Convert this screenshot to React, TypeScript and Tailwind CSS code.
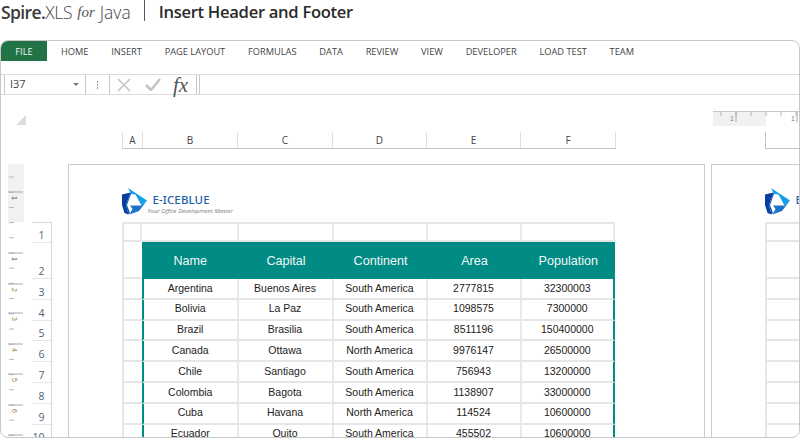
const TABS = ["HOME", "INSERT", "PAGE LAYOUT", "FORMULAS", "DATA", "REVIEW", "VIEW", "DEVELOPER", "LOAD TEST", "TEAM"];

const COLUMNS = [
  { label: "A", width: "w-[21px]" },
  { label: "B", width: "w-[95px]" },
  { label: "C", width: "w-[95px]" },
  { label: "D", width: "w-[94px]" },
  { label: "E", width: "w-[94px]" },
  { label: "F", width: "w-[95px]" },
];

const HEADERS = ["Name", "Capital", "Continent", "Area", "Population"];

const ROWS = [
  ["Argentina", "Buenos Aires", "South America", "2777815", "32300003"],
  ["Bolivia", "La Paz", "South America", "1098575", "7300000"],
  ["Brazil", "Brasilia", "South America", "8511196", "150400000"],
  ["Canada", "Ottawa", "North America", "9976147", "26500000"],
  ["Chile", "Santiago", "South America", "756943", "13200000"],
  ["Colombia", "Bagota", "South America", "1138907", "33000000"],
  ["Cuba", "Havana", "North America", "114524", "10600000"],
  ["Ecuador", "Quito", "South America", "455502", "10600000"],
];

const GRID = "grid grid-cols-[18.5px_96.5px_95px_94px_94px_93.5px]";

function Logo() {
  return (
    <svg width="25" height="27" viewBox="0 0 25 27" className="shrink-0">
      <path d="M6 0 L25 12.5 L19.5 17.5 L13.5 6.5 L9 6 Z" fill="#12a0ea" />
      <path d="M25 12.5 L19.5 17.5 L8 17.5 L10.5 21 L7.5 26.5 L17 23 Z" fill="#1b74c9" />
      <path d="M0 6.5 L8.5 4.5 L4 17 L6.5 26.5 L2.5 25 L0 17 Z" fill="#0a3e9e" />
      <path d="M8.5 4.5 L9 6 L5 17 L8 25 L6.5 26.5 L4 17 Z" fill="#0d56b4" />
    </svg>
  );
}

function VerticalRuler() {
  const inches = [28, 89, 120, 149, 180, 210, 241, 271];
  const labels = ["1", "1", "2", "3", "4", "5", "6", "7"];
  const minor: number[] = [];
  for (let y = 13; y < 280; y += 15.2) minor.push(y);
  return (
    <svg width="16" height="274" viewBox="0 0 16 274" className="shrink-0">
      <rect x="0" y="0" width="16" height="58" fill="#f1f1f1" />
      {minor.map((y) => (
        <line key={y} x1="1" x2="6" y1={y} y2={y} stroke="#b5b5b5" strokeWidth="1" />
      ))}
      {inches.map((y, i) => (
        <g key={y}>
          <line x1="0" x2="15" y1={y} y2={y} stroke="#a8a8a8" strokeWidth="1" />
          <text
            x="4"
            y={y + 4}
            fontSize="7"
            fontFamily="Liberation Sans, sans-serif"
            fill={i < 2 ? "#555" : "#9a7a50"}
            transform={`rotate(90 4 ${y + 4})`}
          >
            {labels[i]}
          </text>
        </g>
      ))}
    </svg>
  );
}

function TopRuler() {
  return (
    <svg width="88" height="16" viewBox="0 0 88 16">
      <rect x="0" y="1" width="53" height="14" fill="#f1f1f1" />
      <line x1="0" x2="88" y1="0.5" y2="0.5" stroke="#c8c8c8" />
      {[8, 23, 38, 53, 68, 83].map((x) => (
        <line key={x} x1={x} x2={x} y1="1" y2="5" stroke="#b5b5b5" />
      ))}
      <line x1="23" x2="23" y1="1" y2="11" stroke="#a8a8a8" />
      <line x1="84" x2="84" y1="1" y2="11" stroke="#a8a8a8" />
      <text x="17" y="10" fontSize="7" fontFamily="Liberation Sans, sans-serif" fill="#9a7a50">1</text>
      <text x="78" y="10" fontSize="7" fontFamily="Liberation Sans, sans-serif" fill="#9a7a50">1</text>
    </svg>
  );
}

function RowHeaders() {
  const labels = ["1", "2", "3", "4", "5", "6", "7", "8", "9", "10"];
  return (
    <div className="ml-[8px] mt-[58px] w-[20px] shrink-0 border-t border-r border-[#d8d8d8] font-['Open_Sans',sans-serif] text-[10.5px] leading-[14px] text-[#4d6478]">
      {labels.map((label, i) => (
        <div
          key={label}
          className={`flex items-end justify-end border-b border-[#e6e6e6] pr-[6px] ${
            i === 0 ? "h-[20px]" : i === 1 ? "h-[36px]" : "h-[20.8px]"
          }`}
        >
          {label}
        </div>
      ))}
    </div>
  );
}

function Table() {
  return (
    <div className="w-[493.5px] border-t-2 border-l-2 border-[#e6e6e6] font-['Liberation_Sans',sans-serif]">
      <div className={`${GRID} h-[18px] border-b-2 border-[#e6e6e6]`}>
        {COLUMNS.map((c) => (
          <div key={c.label} className="border-r-2 border-[#e9e9e9]" />
        ))}
      </div>
      <div className={`${GRID} h-[37px]`}>
        <div className="border-b-2 border-[#e6e6e6]" />
        {HEADERS.map((h) => (
          <div key={h} className="flex items-center justify-center bg-[#008b85] pt-[1px] text-[12.6px] text-[#f2f7f6]">
            {h}
          </div>
        ))}
      </div>
      {ROWS.map((row) => (
        <div key={row[0]} className={`${GRID} h-[20.8px]`}>
          <div className="border-b-2 border-[#e6e6e6]" />
          {row.map((value, i) => (
            <div
              key={i}
              className={`flex items-center justify-center border-b-2 border-[#e6e6e6] text-[10.5px] text-[#222] ${
                i === 0 ? "border-l-2 border-l-[#008b85] border-r-2 border-r-[#e9e9e9]" : i === 4 ? "border-r-2 border-r-[#008b85]" : "border-r-2 border-r-[#e9e9e9]"
              }`}
            >
              {value}
            </div>
          ))}
        </div>
      ))}
    </div>
  );
}

function Branding({ clipped }: { clipped?: boolean }) {
  return (
    <div className="flex h-[57px] items-start pt-[23px]">
      <Logo />
      {!clipped && (
        <div>
          <div className="ml-[6px] mt-[5px] font-['Noto_Sans',sans-serif] text-[11.5px] font-medium leading-[14px] tracking-[0.1px] whitespace-nowrap text-[#1d5ea8]">
            E-ICEBLUE
          </div>
          <div className="ml-[1px] font-['Open_Sans',sans-serif] text-[6px] italic leading-[9px] whitespace-nowrap text-[#7a7a7a]">
            Your Office Development Master
          </div>
        </div>
      )}
      {clipped && (
        <div className="ml-[6px] mt-[5px] font-['Noto_Sans',sans-serif] text-[11.5px] font-medium leading-[14px] text-[#1d5ea8]">E</div>
      )}
    </div>
  );
}

export default function App() {
  return (
    <div className="flex h-[440px] w-[800px] flex-col overflow-hidden bg-white">
      <header className="flex h-[40px] shrink-0 items-start text-[#333]">
        <div className="flex h-[24px] items-center pl-[1px] font-['Open_Sans',sans-serif] text-[17.5px] leading-[24px] whitespace-nowrap">
          <span className="font-semibold tracking-[-0.6px] text-[#3a3a3a]">Spire.</span>
          <span className="font-light tracking-[-0.3px] text-[#444]">XLS</span>
          <span className="ml-[5px] font-['Liberation_Serif',serif] text-[15px] italic text-[#555]">for</span>
          <span className="ml-[5px] font-light text-[#444]">Java</span>
        </div>
        <div className="ml-[13px] h-[21px] w-px bg-[#555]" />
        <div className="ml-[14px] h-[24px] font-['Open_Sans',sans-serif] text-[16.6px] leading-[24px] font-semibold tracking-[-0.3px] whitespace-nowrap text-[#2a2a2a]">
          Insert Header and Footer
        </div>
      </header>

      <div className="flex h-[398px] shrink-0 flex-col overflow-hidden rounded-[8px] border-[1.5px] border-[#c8c8c8]">
        <div className="flex h-[34px] shrink-0 items-start border-b-[1.5px] border-[#dcdcdc] font-['Open_Sans',sans-serif] text-[9.25px] text-[#444]">
          <div className="flex h-[20px] w-[46px] items-center justify-center bg-[#217346] pt-[1px] text-[#eef5f0]">FILE</div>
          <div className="ml-[14px] flex h-[21px] items-center gap-[22.8px] pt-[1px] whitespace-nowrap">
            {TABS.map((t) => (
              <span key={t}>{t}</span>
            ))}
          </div>
        </div>

        <div className="flex h-[20px] shrink-0 items-stretch border-b-[1.5px] border-[#dcdcdc]">
          <div className="ml-[3px] flex w-[82px] items-center justify-between border-x border-[#c8c8c8] pr-[6px] pl-[5px] font-['Open_Sans',sans-serif] text-[11px] text-[#444]">
            I37
            <span className="h-0 w-0 border-x-[3.5px] border-t-[3.5px] border-x-transparent border-t-[#777]" />
          </div>
          <div className="flex w-[23px] flex-col items-center justify-center gap-[1px]">
            <span className="h-[2px] w-[1px] bg-[#999]" />
            <span className="h-[2px] w-[1px] bg-[#999]" />
            <span className="h-[2px] w-[1px] bg-[#999]" />
          </div>
          <div className="flex w-[88px] items-center border-x border-[#c8c8c8]">
            <svg width="14" height="14" viewBox="0 0 14 14" className="ml-[7px]">
              <path d="M1 1 L13 13 M13 1 L1 13" stroke="#c4c4c4" strokeWidth="1.6" fill="none" />
            </svg>
            <svg width="16" height="13" viewBox="0 0 16 13" className="ml-[14px]">
              <path d="M1 7 L6 12 L15 1" stroke="#c4c4c4" strokeWidth="2.6" fill="none" />
            </svg>
            <span className="ml-[12px] font-['Liberation_Serif',serif] text-[21px] leading-[18px] italic text-[#555]">fx</span>
          </div>
          <div className="ml-[2px] flex-1 border-l border-[#c8c8c8]" />
        </div>

        <div className="min-h-0 flex-1">
          <div className="flex h-[37px] items-start justify-between">
            <span className="mt-[20px] ml-[15px] h-0 w-0 border-b-[10px] border-l-[10px] border-b-[#dcdcdc] border-l-transparent" />
            <div className="mt-[16px] mr-[-2px]">
              <TopRuler />
            </div>
          </div>

          <div className="flex h-[17px] font-['Open_Sans',sans-serif] text-[10px] text-[#444]">
            <div className="ml-[121px] flex w-[494px] border-b-[1.5px] border-[#c4c4c4]">
              {COLUMNS.map((c, i) => (
                <div
                  key={c.label}
                  className={`flex items-center justify-center border-r border-[#dedede] ${i === 0 ? "border-l" : ""} ${c.width}`}
                >
                  {c.label}
                </div>
              ))}
            </div>
            <div className="ml-[149px] flex-1 border-b-[1.5px] border-l border-[#c4c4c4]" />
          </div>

          <div className="mt-[15px] flex h-[280px]">
            <div className="ml-[6.5px]">
              <VerticalRuler />
            </div>
            <RowHeaders />
            <div className="ml-[16px] w-[637px] shrink-0 border-t-[1.5px] border-r-[1.5px] border-l-[1.5px] border-[#cccccc] pl-[53px]">
              <Branding />
              <Table />
            </div>
            <div className="ml-[6px] min-w-0 flex-1 border-t-[1.5px] border-l-[1.5px] border-[#cccccc] pl-[53px]">
              <Branding clipped />
              <div className="border-l-2 border-[#e6e6e6]">
                <div className="h-[20px] border-y-2 border-[#e6e6e6]" />
                <div className="h-[37px] border-b-2 border-[#e6e6e6]" />
                {ROWS.map((row) => (
                  <div key={row[0]} className="h-[20.8px] border-b-2 border-[#e6e6e6]" />
                ))}
              </div>
            </div>
          </div>
        </div>
      </div>
    </div>
  );
}
